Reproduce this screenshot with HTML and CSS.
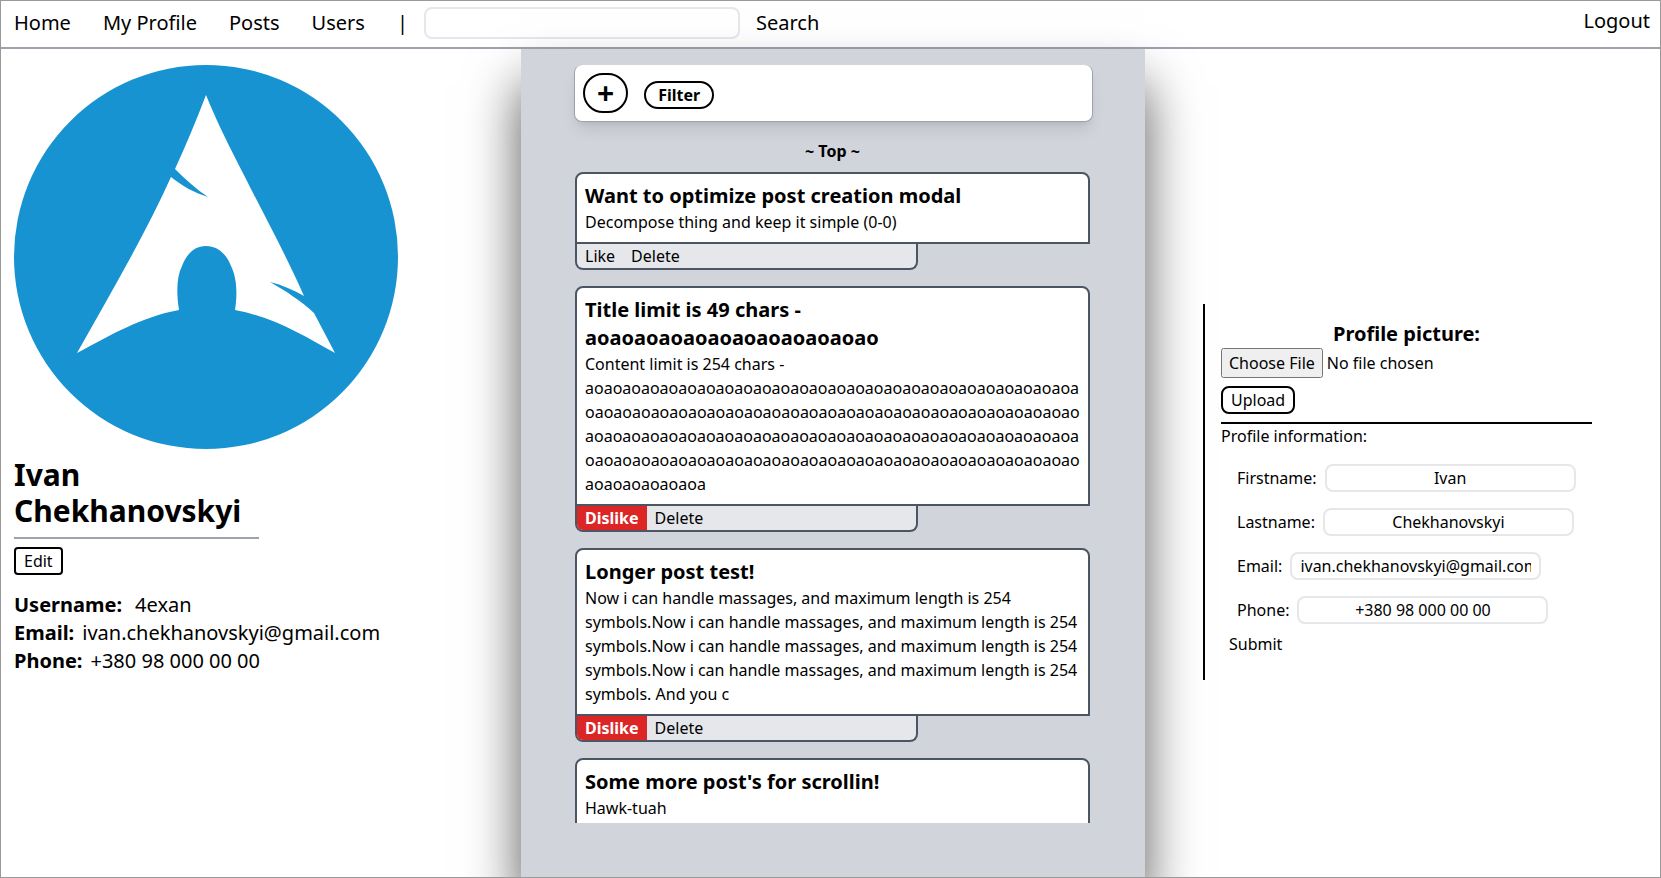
FILE: index.html
```html
<!DOCTYPE html>
<html lang="en">
<head>
<meta charset="utf-8">
<title>My Profile</title>
<link rel="stylesheet" href="styles.css">
</head>
<body>
<div class="app">
  <header class="topbar">
    <nav class="nav">
      <a href="#">Home</a>
      <a href="#">My Profile</a>
      <a href="#">Posts</a>
      <a href="#">Users</a>
    </nav>
    <form class="search">
      <span>|</span>
      <input class="field search-field" type="text" aria-label="Search users">
      <button type="button">Search</button>
    </form>
    <a class="logout" href="#">Logout</a>
  </header>

  <main class="columns">
    <section class="profile">
      <svg class="avatar" viewBox="0 0 384 384" role="img" aria-label="Profile picture">
        <circle cx="192" cy="192" r="192" fill="#1793d1"/>
        <path fill="#fff" d="M192 30 C202 55 216 83 232 114 C251 152 271 188 290 231 C280 225 268 220 256 217 C272 226 287 236 300 248 L321 288 C289 270 259 252 221 245 C224 226 222 211 217 201 C212 188 203 181 192 181 C181 181 173 188 168 201 C163 211 162 226 165 245 C127 252 97 270 63 288 C95 231 131 170 157 112 C168 121 181 128 194 132 C182 124 171 114 161 104 C172 80 182 56 192 30 Z"/>
      </svg>
      <h1 class="name">Ivan Chekhanovskyi</h1>
      <button class="outline edit" type="button">Edit</button>
      <dl class="details">
        <div class="wide"><dt>Username:</dt><dd>4exan</dd></div>
        <div><dt>Email:</dt><dd>ivan.chekhanovskyi@gmail.com</dd></div>
        <div><dt>Phone:</dt><dd>+380 98 000 00 00</dd></div>
      </dl>
    </section>

    <section class="feed">
      <div class="toolbar">
        <button class="outline add" type="button" aria-label="New post">+</button>
        <button class="outline filter" type="button">Filter</button>
      </div>
      <div class="posts">
        <p class="marker">~ Top ~</p>
        <article class="post">
          <div class="card">
            <h2>Want to optimize post creation modal</h2>
            <p>Decompose thing and keep it simple (0-0)</p>
          </div>
          <div class="actions"><button type="button">Like</button><button type="button">Delete</button></div>
        </article>
        <article class="post">
          <div class="card">
            <h2>Title limit is 49 chars - aoaoaoaoaoaoaoaoaoaoaoao</h2>
            <p>Content limit is 254 chars - aoaoaoaoaoaoaoaoaoaoaoaoaoaoaoaoaoaoaoaoaoaoaoaoaoaoaoaoaoaoaoaoaoaoaoaoaoaoaoaoaoaoaoaoaoaoaoaoaoaoaoaoaoaoaoaoaoaoaoaoaoaoaoaoaoaoaoaoaoaoaoaoaoaoaoaoaoaoaoaoaoaoaoaoaoaoaoaoaoaoaoaoaoaoaoaoaoaoaoaoaoaoaoaoaoaoaoaoaoaoaoaoa</p>
          </div>
          <div class="actions"><button class="active" type="button">Dislike</button><button type="button">Delete</button></div>
        </article>
        <article class="post">
          <div class="card">
            <h2>Longer post test!</h2>
            <p>Now i can handle massages, and maximum length is 254 symbols.Now i can handle massages, and maximum length is 254 symbols.Now i can handle massages, and maximum length is 254 symbols.Now i can handle massages, and maximum length is 254 symbols. And you c</p>
          </div>
          <div class="actions"><button class="active" type="button">Dislike</button><button type="button">Delete</button></div>
        </article>
        <article class="post">
          <div class="card">
            <h2>Some more post's for scrollin!</h2>
            <p>Hawk-tuah</p>
          </div>
        </article>
      </div>
    </section>

    <aside class="settings">
      <div class="panel">
        <form class="upload">
          <label for="picture">Profile picture:</label>
          <input id="picture" type="file">
          <button class="outline" type="button">Upload</button>
        </form>
        <p>Profile information:</p>
        <form class="info">
          <div class="row"><label for="first">Firstname:</label><input class="field" id="first" type="text" value="Ivan"></div>
          <div class="row"><label for="last">Lastname:</label><input class="field" id="last" type="text" value="Chekhanovskyi"></div>
          <div class="row"><label for="email">Email:</label><input class="field" id="email" type="text" value="ivan.chekhanovskyi@gmail.com"></div>
          <div class="row"><label for="phone">Phone:</label><input class="field" id="phone" type="text" value="+380 98 000 00 00"></div>
          <button type="button">Submit</button>
        </form>
      </div>
    </aside>
  </main>
</div>
</body>
</html>
```
FILE: styles.css
```css
* { box-sizing: border-box; margin: 0; }

body {
  font: 16px/24px "Noto Sans", sans-serif;
  color: #000;
  background: #fff;
}

button, input { font: inherit; color: inherit; }

button {
  padding: 0;
  border: 0;
  background: transparent;
  cursor: pointer;
}

a { color: inherit; text-decoration: none; }

.app {
  display: flex;
  flex-direction: column;
  height: 100vh;
  overflow: hidden;
  border: 1px solid #999;
}

.topbar {
  display: flex;
  align-items: center;
  padding: 6px 10px 8px 13px;
  border-bottom: 2px solid #9ca3af;
  font-size: 20px;
  line-height: 28px;
}

.nav { display: flex; gap: 32px; }

.search {
  display: flex;
  align-items: center;
  gap: 16px;
  margin-left: 32px;
}

.field {
  padding: 0 8px;
  border: 2px solid #e5e7eb;
  border-radius: 8px;
  background: transparent;
}

.search-field { width: 316px; height: 32px; }

.logout { margin-left: auto; align-self: flex-start; }

.columns {
  flex: 1;
  display: grid;
  grid-template-columns: minmax(0, 520fr) minmax(0, 624fr) minmax(0, 515fr);
  grid-template-rows: minmax(0, 1fr);
  min-height: 0;
}

.profile { padding: 16px 13px; }

.avatar { display: block; width: 384px; height: 384px; }

.name {
  width: 245px;
  margin: 8px 0;
  padding-bottom: 8px;
  border-bottom: 2px solid #9ca3af;
  font-size: 30px;
  line-height: 36px;
}

.outline {
  padding: 0 8px;
  border: 2px solid #000;
  border-radius: 8px;
}

.edit { display: block; border-radius: 4px; }

.details { margin-top: 16px; font-size: 20px; line-height: 28px; }
.details div { display: flex; gap: 8px; }
.details .wide { gap: 13px; }
.details dt { font-weight: 700; }

.feed {
  display: flex;
  flex-direction: column;
  min-height: 0;
  padding: 16px 52px 54px 53px;
  background: #d1d5db;
  box-shadow: 0 35px 50px rgba(0, 0, 0, .66);
}

.toolbar {
  display: flex;
  align-items: flex-start;
  gap: 16px;
  padding: 8px;
  border: 1px solid #9ca3af;
  border-top: 0;
  border-radius: 8px;
  background: #fff;
  box-shadow: 0 10px 15px -3px rgba(0, 0, 0, .1), 0 4px 6px -4px rgba(0, 0, 0, .1);
}

.add {
  padding: 0 12px;
  border-radius: 20px;
  font-size: 30px;
  font-weight: 700;
  line-height: 36px;
}

.filter {
  margin-top: 8px;
  padding: 0 12px;
  border-radius: 14px;
  font-weight: 700;
}

.posts {
  flex: 1;
  min-height: 0;
  margin-top: 17px;
  padding: 0 3px 0 1px;
  overflow-y: auto;
  scrollbar-width: none;
}

.marker {
  margin-bottom: 9px;
  font-weight: 700;
  text-align: center;
}

.post { margin-bottom: 16px; }

.card {
  padding: 8px;
  border: 2px solid #4b5563;
  border-radius: 8px 8px 0 0;
  background: #fff;
  overflow-wrap: break-word;
}

.card h2 { font-size: 20px; line-height: 28px; }

.actions {
  display: flex;
  width: 66.6%;
  overflow: hidden;
  border: 2px solid #4b5563;
  border-top: 0;
  border-radius: 0 0 8px 8px;
  background: #e5e7eb;
}

.actions button { padding: 0 8px; }

.actions .active {
  background: #dc2626;
  color: #fff;
  font-weight: 700;
}

.settings {
  display: flex;
  align-items: center;
  padding: 58px 68px 0 58px;
}

.panel {
  flex: 1;
  padding: 16px 0 16px 16px;
  border-left: 2px solid #000;
}

.upload {
  display: flex;
  flex-direction: column;
  align-items: flex-start;
  padding-bottom: 8px;
  border-bottom: 2px solid #000;
}

.upload label {
  align-self: center;
  font-size: 20px;
  font-weight: 700;
  line-height: 28px;
}

.upload input { margin-bottom: 8px; }
.upload input::file-selector-button { padding: 2px 6px; font: inherit; }

.info { padding: 8px; }

.row {
  display: flex;
  align-items: center;
  gap: 8px;
  padding: 8px;
}

.row .field { width: 251px; height: 28px; text-align: center; }
```
